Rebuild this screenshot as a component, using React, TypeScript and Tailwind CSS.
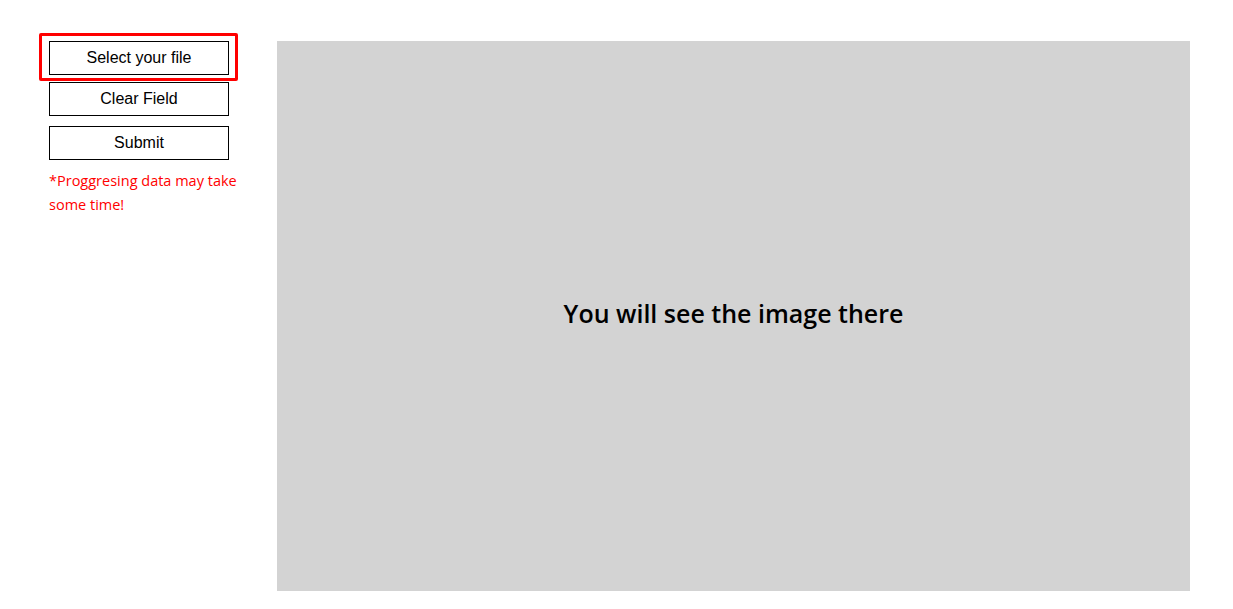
import React from "react";

const App = () => {
  return (
    <div className="flex min-h-[609px] bg-white pt-[33px]">
      <div className="w-[277px] shrink-0 pl-[39px]">
        <div className="h-[48px] w-[199px] rounded-[2px] border-[3px] border-[#ff0000] pl-[7px] pt-[5px]">
          <button className="h-[34px] w-[180px] border border-black bg-white text-[16px] text-black [font-family:'Liberation_Sans',Arial,sans-serif]">
            Select your file
          </button>
        </div>
        <div className="flex flex-col gap-[10px] pl-[10px] pt-px">
          <button className="h-[34px] w-[180px] border border-black bg-white text-[16px] text-black [font-family:'Liberation_Sans',Arial,sans-serif]">
            Clear Field
          </button>
          <button className="h-[34px] w-[180px] border border-black bg-white text-[16px] text-black [font-family:'Liberation_Sans',Arial,sans-serif]">
            Submit
          </button>
          <p className="-mt-px w-[200px] text-[14.5px] leading-[24px] text-[#ff0000] [font-family:'Open_Sans',sans-serif]">
            *Proggresing data may take some time!
          </p>
        </div>
      </div>
      <div className="mt-[8px] flex h-[550px] w-[913px] shrink-0 items-center justify-center bg-[#d3d3d3] pb-[4px]">
        <h2 className="text-[25px] font-semibold text-black [font-family:'Open_Sans',sans-serif]">
          You will see the image there
        </h2>
      </div>
    </div>
  );
};

export default App;
